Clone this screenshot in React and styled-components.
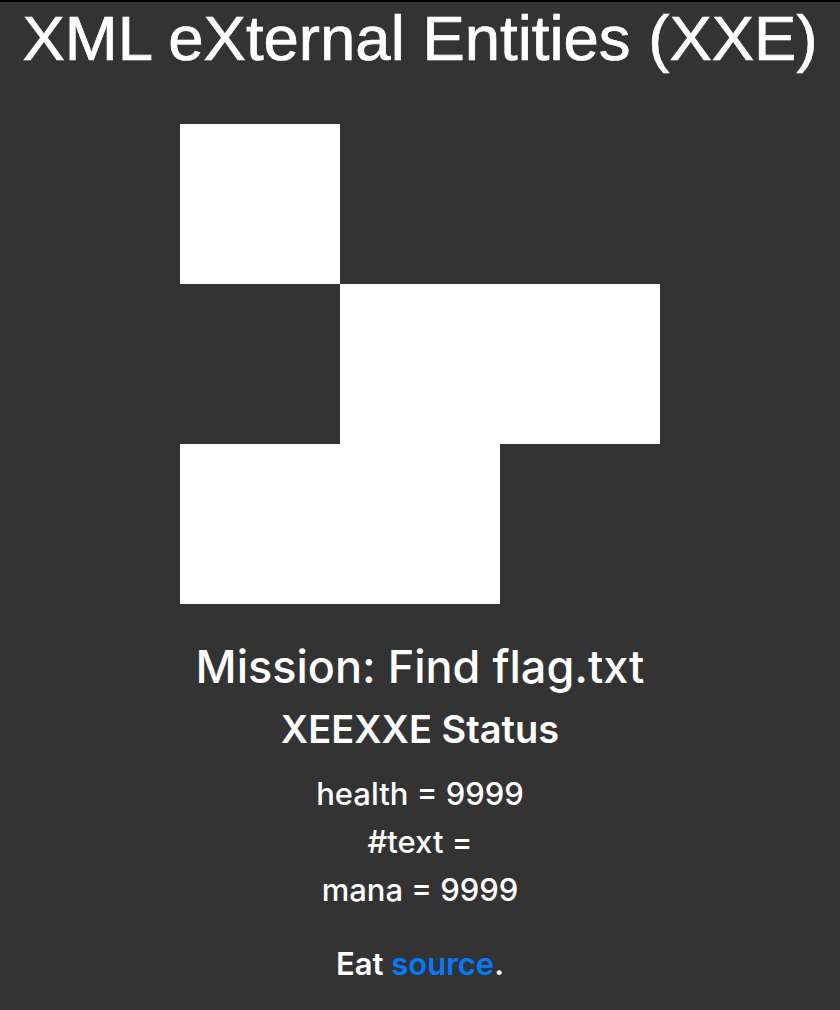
import styled, { createGlobalStyle } from "styled-components";

const GlobalStyle = createGlobalStyle`
  html, body {
    margin: 0;
    padding: 0;
    background: #333333;
  }
  body {
    border-top: 2px solid #000;
    color: #fff;
    font-family: Inter, "Liberation Sans", sans-serif;
  }
`;

// 3x3 map, 1 = white tile
const MAP = [
  [1, 0, 0],
  [0, 1, 1],
  [1, 1, 0],
];

function App() {
  return (
    <>
      <GlobalStyle />
      <Page>
        <Title>XML eXternal Entities (XXE)</Title>
        <Board>
          {MAP.flat().map((v, i) => (
            <Tile key={i} $on={v === 1} />
          ))}
        </Board>
        <Mission>Mission: Find flag.txt</Mission>
        <Status>XEEXXE Status</Status>
        <Stat>health = 9999</Stat>
        <Stat>#text = </Stat>
        <Stat>mana = 9999</Stat>
        <Footer>
          Eat <a href="#source">source</a>.
        </Footer>
      </Page>
    </>
  );
}

export default App;

const Page = styled.div`
  display: flex;
  flex-direction: column;
  align-items: center;
  text-align: center;
`;

const Title = styled.h1`
  font-family: "Liberation Sans", Arial, sans-serif;
  font-weight: 400;
  font-size: 63.5px;
  line-height: 1;
  margin: 5px 0 0;
  -webkit-text-stroke: 0.7px #fff;
`;

const Board = styled.div`
  display: grid;
  grid-template-columns: repeat(3, 160px);
  grid-template-rows: repeat(3, 160px);
  margin-top: 53px;
`;

const Tile = styled.div`
  background: ${(p) => (p.$on ? "#ffffff" : "transparent")};
`;

const Mission = styled.h2`
  font-size: 45px;
  font-weight: 500;
  line-height: 1.2;
  margin: 36px 0 0;
`;

const Status = styled.h3`
  font-size: 38px;
  font-weight: 600;
  line-height: 1.2;
  margin: 13px 0 23px;
`;

const Stat = styled.p`
  font-size: 31px;
  font-weight: 500;
  line-height: 1.2;
  margin: 0 0 11px;
`;

const Footer = styled.p`
  font-size: 31px;
  font-weight: 600;
  line-height: 1.2;
  margin: 25px 0 0;
  a {
    color: #007bff;
    text-decoration: none;
  }
`;
